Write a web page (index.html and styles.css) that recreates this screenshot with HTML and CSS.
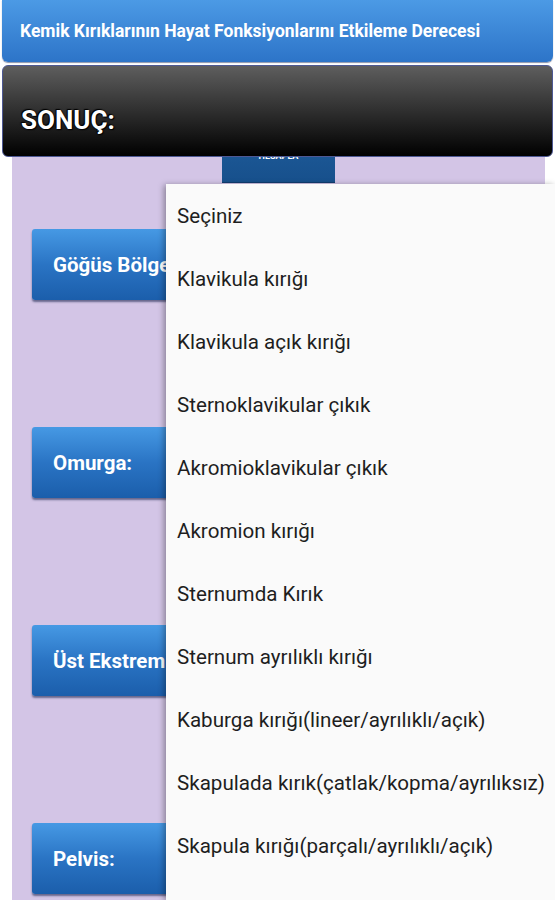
FILE: index.html
```html
<!DOCTYPE html>
<html lang="tr">
<head>
  <meta charset="UTF-8">
  <meta name="viewport" content="width=device-width, initial-scale=1.0">
  <link rel="stylesheet" href="styles.css">
</head>
<body>

<div class="title-bar">Kemik Kırıklarının Hayat Fonksiyonlarını Etkileme Derecesi</div>
<div class="result-bar"><span class="result-label">SONUÇ:</span></div>

<div class="panel">
  <div class="calc-wrap"><div class="calc-btn">HESAPLA</div></div>
  <div class="region"><div class="region-btn">Göğüs Bölgesi:</div></div>
  <div class="region"><div class="region-btn">Omurga:</div></div>
  <div class="region"><div class="region-btn">Üst Ekstremite:</div></div>
  <div class="region"><div class="region-btn">Pelvis:</div></div>
</div>

<ul class="dropdown">
  <li>Seçiniz</li>
  <li>Klavikula kırığı</li>
  <li>Klavikula açık kırığı</li>
  <li>Sternoklavikular çıkık</li>
  <li>Akromioklavikular çıkık</li>
  <li>Akromion kırığı</li>
  <li>Sternumda Kırık</li>
  <li>Sternum ayrılıklı kırığı</li>
  <li>Kaburga kırığı(lineer/ayrılıklı/açık)</li>
  <li>Skapulada kırık(çatlak/kopma/ayrılıksız)</li>
  <li>Skapula kırığı(parçalı/ayrılıklı/açık)</li>
</ul>

</body>
</html>
```

FILE: styles.css
```css
body {
  margin: 0;
  height: 900px;
  overflow: hidden;
  background: #ffffff;
  font-family: Roboto, "Noto Sans", sans-serif;
}

.title-bar {
  position: relative;
  z-index: 2;
  margin: 0 2px;
  height: 62px;
  display: flex;
  align-items: center;
  padding-left: 18px;
  border-radius: 0 0 6px 6px;
  background: linear-gradient(#4c9ae5, #2d74c8);
  color: #fff;
  font-size: 17.5px;
  font-weight: bold;
  box-shadow: 0 1px 1px rgba(20, 40, 90, 0.5);
}

.result-bar {
  position: relative;
  z-index: 2;
  margin: 3px 2px 0;
  height: 92px;
  display: flex;
  align-items: flex-end;
  padding: 0 0 21px 18px;
  box-sizing: border-box;
  border: 1px solid #4d5893;
  border-radius: 6px;
  background: linear-gradient(#5e5e5e, #2a2a2a 55%, #000 100%);
}

.result-label {
  color: #fff;
  font-size: 26px;
  font-weight: bold;
  line-height: 30px;
  text-shadow: 0 0 2px #000, 1px 1px 1px #000, -1px -1px 1px #000;
}

.panel {
  position: relative;
  z-index: 1;
  margin: -30px 10px 0 12px;
  height: 800px;
  background: #d3c5e6;
}

.calc-wrap {
  display: flex;
  justify-content: center;
}

.calc-btn {
  width: 113px;
  height: 56px;
  box-sizing: border-box;
  padding-top: 24px;
  text-align: center;
  background: linear-gradient(#1f5d9c, #17508c);
  border-bottom: 1px solid #123e70;
  color: #fff;
  font-size: 9px;
  font-weight: bold;
}

.region {
  height: 198px;
  padding: 46px 0 0 20px;
  box-sizing: border-box;
}

.region:first-of-type {
  padding-top: 0;
}

.region-btn {
  width: 250px;
  height: 71px;
  display: flex;
  align-items: center;
  padding-left: 21px;
  box-sizing: border-box;
  border-radius: 3px;
  background: linear-gradient(#4699e4, #2a74c4 50%, #1b5eab);
  box-shadow: 0 2px 2px rgba(30, 40, 80, 0.6);
  color: #fff;
  font-size: 20.5px;
  font-weight: bold;
}

.dropdown {
  position: absolute;
  z-index: 3;
  left: 166px;
  right: 0;
  top: 184px;
  bottom: 0;
  margin: 0;
  padding: 0;
  list-style: none;
  background: #fafafa;
  box-shadow: -2px 1px 6px rgba(0, 0, 0, 0.35);
}

.dropdown li {
  height: 63px;
  display: flex;
  align-items: center;
  padding-left: 11px;
  color: #1e1e1e;
  font-size: 20.6px;
}
```
